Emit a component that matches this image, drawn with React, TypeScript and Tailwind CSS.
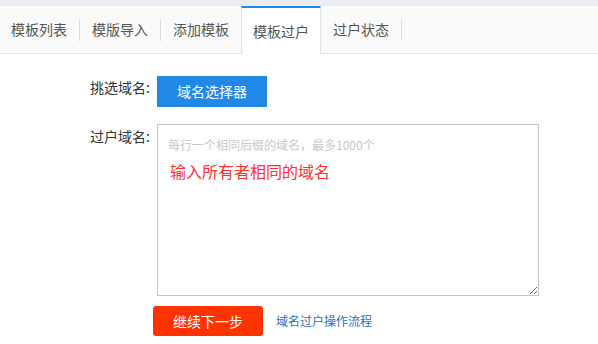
const font = { fontFamily: '"Noto Sans CJK SC", "Liberation Sans", sans-serif' };

const tabs = ["模板列表", "模版导入", "添加模板", "模板过户", "过户状态"];
const ACTIVE = 3;

function Tabs() {
  return (
    <div className="flex h-[48px] items-stretch border-b border-[#e4e4e4] bg-[#fafafa]">
      {tabs.map((t, i) => {
        const active = i === ACTIVE;
        // separators sit between inactive neighbours; the active tab brings its own borders
        const sep = !active && i + 1 !== ACTIVE;
        return (
          <div key={t} className="flex items-stretch">
            {active ? (
              <div className="mb-[-1px] flex items-center border-x border-t-2 border-x-[#e4e4e4] border-t-[#1e87e6] bg-white px-[11px] pt-[1px] text-[14px] text-[#555]">
                {t}
              </div>
            ) : (
              <div className={`flex items-center pr-3 text-[14px] text-[#555] ${i === 0 ? "pl-[11px]" : "pl-3"}`}>{t}</div>
            )}
            {sep && <span className="h-[22px] w-px self-center bg-[#dcdcdc]" />}
          </div>
        );
      })}
    </div>
  );
}

export default function App() {
  return (
    <div className="h-[344px] w-[598px] overflow-hidden bg-white" style={font}>
      <div className="h-[6px] bg-[#e9edf2]" />
      <Tabs />

      <div className="mt-[22px] flex items-start">
        <label className="w-[150px] pt-[1px] text-right text-[14px] leading-[20px] text-[#333]">挑选域名:</label>
        <button className="ml-[7px] h-[31px] w-[110px] bg-[#2188e8] text-[14px] text-white">域名选择器</button>
      </div>

      <div className="mt-[17px] flex items-start">
        <label className="w-[150px] pt-[2px] text-right text-[14px] leading-[20px] text-[#333]">过户域名:</label>
        <div className="relative ml-[7px]">
          <textarea
            className="block h-[172px] w-[382px] resize border border-[#c4c4c4] px-[10px] pt-[12px] text-[12px] leading-[16px] text-[#333] outline-none placeholder:text-[#c8c8c8]"
            placeholder="每行一个相同后缀的域名，最多1000个"
          />
          <span className="pointer-events-none absolute left-[13px] top-[37px] text-[16px] leading-[20px] text-[#ff3030]">
            输入所有者相同的域名
          </span>
        </div>
      </div>

      <div className="ml-[153px] mt-[10px] flex items-center">
        <button className="h-[30px] w-[110px] rounded-[3px] bg-[#ff3300] text-[14px] text-white">继续下一步</button>
        <a href="#" className="ml-[13px] text-[12px] text-[#1c6fcc]">域名过户操作流程</a>
      </div>
    </div>
  );
}
